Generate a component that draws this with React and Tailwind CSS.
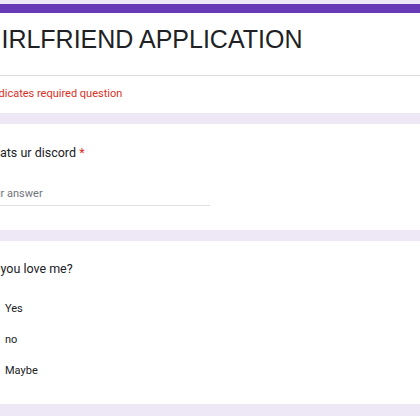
import React from "react";

const options = ["Yes", "no", "Maybe"];

const App = () => {
  return (
    <div className="w-[420px] h-[420px] overflow-hidden bg-[#ede7f6] pt-1 font-['Roboto',sans-serif] text-[#202124]">
      <div className="ml-[-36px] w-[480px] flex flex-col gap-[11px]">
        {/* Title card */}
        <div className="bg-white">
          <div className="h-[9px] bg-[#673ab7]" />
          <div className="px-[18px] pt-[10px] pb-[20px]">
            <h1 className="font-['Liberation_Sans',Arial,sans-serif] text-[25px] leading-[32px] text-[#202124]">
              GIRLFRIEND APPLICATION
            </h1>
          </div>
          <div className="h-px bg-[#dadce0]" />
          <div className="px-[18px] pt-[10px] pb-[11px] text-[11px] leading-[16px] text-[#d93025]">
            * Indicates required question
          </div>
        </div>

        {/* Question 1 */}
        <div className="bg-white px-[18px] pt-[19px] pb-[24px]">
          <div className="text-[12.5px] leading-[20px]">
            Whats ur discord <span className="text-[#d93025]">*</span>
          </div>
          <div className="mt-[23px] w-[228px] border-b border-[#e0e0e0] pb-[3px] text-[11px] leading-[16px] text-[#70757a]">
            Your answer
          </div>
        </div>

        {/* Question 2 */}
        <div className="bg-white px-[18px] pt-[18px] pb-[25px]">
          <div className="text-[12.5px] leading-[20px]">Do you love me?</div>
          <div className="mt-[22px] flex flex-col gap-[15px]">
            {options.map((opt) => (
              <label key={opt} className="flex items-center gap-[8px] text-[11px] leading-[16px]">
                <span className="w-[15px] h-[15px] rounded-full border-2 border-[#5f6368]" />
                {opt}
              </label>
            ))}
          </div>
        </div>

        <div className="bg-white h-[40px] mt-px" />
      </div>
    </div>
  );
};

export default App;
